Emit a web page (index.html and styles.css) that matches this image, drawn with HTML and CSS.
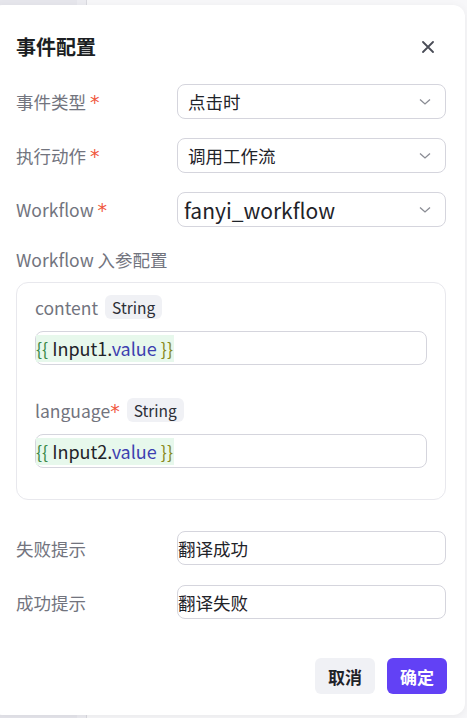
FILE: index.html
```html
<!DOCTYPE html>
<html lang="zh-CN">
<head>
    <meta charset="UTF-8">
    <meta name="viewport" content="width=device-width, initial-scale=1.0">
    <title>事件配置</title>
    <link rel="stylesheet" href="styles.css">
</head>
<body>
    <div class="page">
        <div class="sidebar"></div>
        <div class="sidebar-edge"></div>
        <div class="main"></div>
    </div>

    <div class="modal">
        <div class="modal-header">
            <h2 class="modal-title">事件配置</h2>
            <button class="close-btn" aria-label="关闭">
                <svg width="12" height="12" viewBox="0 0 12 12">
                    <path d="M1 1 L11 11 M11 1 L1 11" stroke="#4a4d57" stroke-width="1.8" stroke-linecap="round" fill="none"/>
                </svg>
            </button>
        </div>

        <div class="form-row">
            <label class="form-label">事件类型 <span class="req">*</span></label>
            <div class="select">
                <span>点击时</span>
                <svg class="chevron" width="12" height="8" viewBox="0 0 12 8"><path d="M1 1.5 L6 6 L11 1.5" stroke="#8a8c94" stroke-width="1.3" fill="none"/></svg>
            </div>
        </div>
        <div class="form-row">
            <label class="form-label">执行动作 <span class="req">*</span></label>
            <div class="select">
                <span>调用工作流</span>
                <svg class="chevron" width="12" height="8" viewBox="0 0 12 8"><path d="M1 1.5 L6 6 L11 1.5" stroke="#8a8c94" stroke-width="1.3" fill="none"/></svg>
            </div>
        </div>
        <div class="form-row">
            <label class="form-label">Workflow <span class="req">*</span></label>
            <div class="select select-large">
                <span>fanyi_workflow</span>
                <svg class="chevron" width="12" height="8" viewBox="0 0 12 8"><path d="M1 1.5 L6 6 L11 1.5" stroke="#8a8c94" stroke-width="1.3" fill="none"/></svg>
            </div>
        </div>

        <div class="section-label">Workflow 入参配置</div>
        <div class="param-box">
            <div class="param">
                <div class="param-head">
                    <span class="param-name">content</span>
                    <span class="tag">String</span>
                </div>
                <div class="code-input">
                    <span class="hl"><span class="brace">{{</span> Input1.<span class="prop">value</span> <span class="brace-end">}}</span></span>
                </div>
            </div>
            <div class="param">
                <div class="param-head">
                    <span class="param-name">language<span class="req">*</span></span>
                    <span class="tag">String</span>
                </div>
                <div class="code-input">
                    <span class="hl"><span class="brace">{{</span> Input2.<span class="prop">value</span> <span class="brace-end">}}</span></span>
                </div>
            </div>
        </div>

        <div class="form-row text-row">
            <label class="form-label">失败提示</label>
            <input class="plain-input" type="text" value="翻译成功">
        </div>
        <div class="form-row text-row">
            <label class="form-label">成功提示</label>
            <input class="plain-input" type="text" value="翻译失败">
        </div>

        <div class="modal-footer">
            <button class="btn btn-cancel">取消</button>
            <button class="btn btn-primary">确定</button>
        </div>
    </div>
</body>
</html>
```

FILE: styles.css
```css
body {
    margin: 0;
    padding: 0;
    font-family: "Noto Sans CJK SC", "Noto Sans", sans-serif;
    color: #1f2329;
    overflow: hidden;
}
.page {
    display: flex;
    height: 718px;
}
.sidebar {
    width: 77px;
    background-color: #e6e6ec;
}
.sidebar-edge {
    width: 9px;
    background-color: #ececf1;
    border-right: 1px solid #d9d9df;
}
.main {
    flex: 1;
    background-color: #f7f7f9;
}

.modal {
    position: absolute;
    top: 5px;
    left: -10px;
    width: 475px;
    height: 710px;
    box-sizing: border-box;
    padding: 0 19px 0 26px;
    background-color: #fff;
    border-radius: 12px;
    box-shadow: 0 2px 10px rgba(0, 0, 0, 0.06);
}
.modal-header {
    display: flex;
    align-items: center;
    justify-content: space-between;
    height: 28px;
    padding-top: 28px;
    margin-bottom: 23px;
}
.modal-title {
    margin: 0;
    font-size: 20px;
    font-weight: 600;
    line-height: 28px;
    color: #1c1f23;
}
.close-btn {
    border: none;
    background: none;
    padding: 0;
    margin-right: 12px;
    width: 12px;
    height: 12px;
    display: flex;
    cursor: pointer;
}

.form-row {
    display: flex;
    align-items: center;
    height: 35px;
    margin-bottom: 19px;
}
.form-label {
    width: 161px;
    flex-shrink: 0;
    font-size: 17.5px;
    color: #72747e;
}
.req {
    color: #f0573d;
    font-family: "DejaVu Sans", sans-serif;
    font-size: 19px;
    line-height: 1;
}
.select {
    flex: 1;
    height: 35px;
    box-sizing: border-box;
    border: 1px solid #d5d5dd;
    border-radius: 8px;
    display: flex;
    align-items: center;
    justify-content: space-between;
    padding: 0 14px 0 10px;
    font-size: 17.5px;
    color: #1f2329;
}
.select-large {
    padding-left: 6px;
    font-size: 21px;
}
.chevron {
    flex-shrink: 0;
}

.section-label {
    font-size: 17.5px;
    line-height: 28px;
    color: #72747e;
    margin-bottom: 8px;
}
.param-box {
    border: 1px solid #e8e8ed;
    border-radius: 12px;
    padding: 12px 18px 31px 18px;
    display: flex;
    flex-direction: column;
    gap: 33px;
    margin-bottom: 31px;
}
.param-head {
    display: flex;
    align-items: center;
    gap: 7px;
    height: 24px;
    margin-bottom: 12px;
}
.param-name {
    font-size: 17.5px;
    color: #72747e;
}
.tag {
    display: inline-flex;
    align-items: center;
    height: 24px;
    padding: 0 7px;
    border-radius: 6px;
    background-color: #f0f1f5;
    font-size: 15.5px;
    color: #2b2e35;
}
.code-input {
    height: 34px;
    box-sizing: border-box;
    border: 1px solid #d5d5dd;
    border-radius: 8px;
    display: flex;
    align-items: center;
    font-size: 18px;
    color: #1f2329;
}
.hl {
    background-color: #e7f8ec;
    line-height: 27px;
    padding-right: 1px;
}
.brace {
    color: #3c8a4a;
}
.brace-end {
    color: #8a8a1e;
}
.prop {
    color: #3d3fb0;
}

.text-row {
    height: 34px;
    margin-bottom: 20px;
}
.plain-input {
    flex: 1;
    height: 34px;
    box-sizing: border-box;
    border: 1px solid #d5d5dd;
    border-radius: 8px;
    padding: 0;
    font-family: "Noto Sans CJK SC", sans-serif;
    font-size: 17.5px;
    color: #1f2329;
    background: #fff;
    outline: none;
}

.modal-footer {
    display: flex;
    justify-content: flex-end;
    gap: 12px;
    margin-top: 39px;
    margin-right: -1px;
}
.btn {
    width: 60px;
    height: 36px;
    border: none;
    border-radius: 6px;
    font-family: "Noto Sans CJK SC", sans-serif;
    font-size: 17px;
    font-weight: 700;
    cursor: pointer;
}
.btn-cancel {
    background-color: #f0f1f5;
    color: #1f2329;
}
.btn-primary {
    background-color: #6241f5;
    color: #fff;
}
```
